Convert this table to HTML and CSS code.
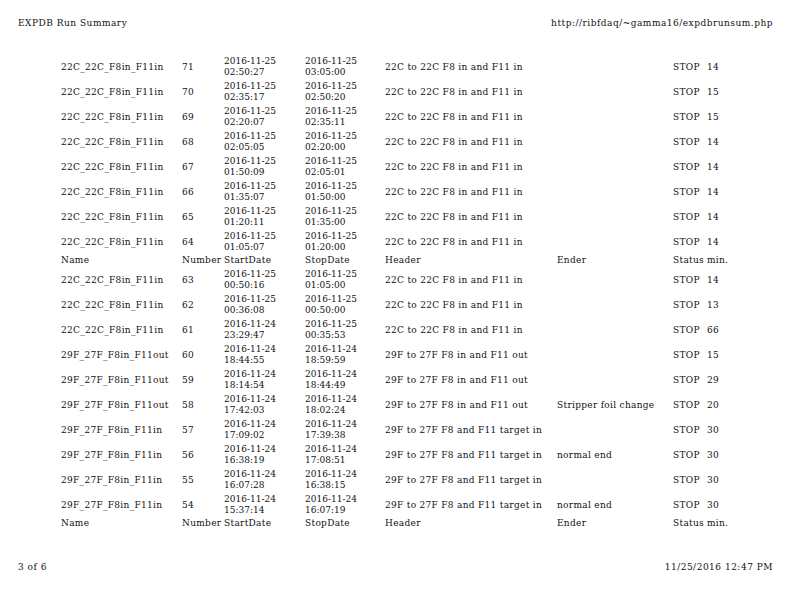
FILE: index.html
```html
<!DOCTYPE html>
<html lang="en">
<head>
    <meta charset="UTF-8">
    <title>EXPDB Run Summary</title>
    <link rel="stylesheet" href="styles.css">
</head>
<body>
    <div class="page">
        <div class="print-head">
            <span>EXPDB Run Summary</span>
            <span>http://ribfdaq/~gamma16/expdbrunsum.php</span>
        </div>

        <table class="runs">
            <colgroup>
                <col class="c-name"><col class="c-num"><col class="c-date"><col class="c-date2">
                <col class="c-header"><col class="c-ender"><col class="c-status"><col class="c-min">
            </colgroup>
            <tr><td>22C_22C_F8in_F11in</td><td>71</td><td class="dt">2016-11-25 02:50:27</td><td class="dt">2016-11-25 03:05:00</td><td>22C to 22C F8 in and F11 in</td><td></td><td>STOP</td><td>14</td></tr>
            <tr><td>22C_22C_F8in_F11in</td><td>70</td><td class="dt">2016-11-25 02:35:17</td><td class="dt">2016-11-25 02:50:20</td><td>22C to 22C F8 in and F11 in</td><td></td><td>STOP</td><td>15</td></tr>
            <tr><td>22C_22C_F8in_F11in</td><td>69</td><td class="dt">2016-11-25 02:20:07</td><td class="dt">2016-11-25 02:35:11</td><td>22C to 22C F8 in and F11 in</td><td></td><td>STOP</td><td>15</td></tr>
            <tr><td>22C_22C_F8in_F11in</td><td>68</td><td class="dt">2016-11-25 02:05:05</td><td class="dt">2016-11-25 02:20:00</td><td>22C to 22C F8 in and F11 in</td><td></td><td>STOP</td><td>14</td></tr>
            <tr><td>22C_22C_F8in_F11in</td><td>67</td><td class="dt">2016-11-25 01:50:09</td><td class="dt">2016-11-25 02:05:01</td><td>22C to 22C F8 in and F11 in</td><td></td><td>STOP</td><td>14</td></tr>
            <tr><td>22C_22C_F8in_F11in</td><td>66</td><td class="dt">2016-11-25 01:35:07</td><td class="dt">2016-11-25 01:50:00</td><td>22C to 22C F8 in and F11 in</td><td></td><td>STOP</td><td>14</td></tr>
            <tr><td>22C_22C_F8in_F11in</td><td>65</td><td class="dt">2016-11-25 01:20:11</td><td class="dt">2016-11-25 01:35:00</td><td>22C to 22C F8 in and F11 in</td><td></td><td>STOP</td><td>14</td></tr>
            <tr><td>22C_22C_F8in_F11in</td><td>64</td><td class="dt">2016-11-25 01:05:07</td><td class="dt">2016-11-25 01:20:00</td><td>22C to 22C F8 in and F11 in</td><td></td><td>STOP</td><td>14</td></tr>
            <tr class="hdr"><td>Name</td><td>Number</td><td>StartDate</td><td>StopDate</td><td>Header</td><td>Ender</td><td>Status</td><td>min.</td></tr>
            <tr><td>22C_22C_F8in_F11in</td><td>63</td><td class="dt">2016-11-25 00:50:16</td><td class="dt">2016-11-25 01:05:00</td><td>22C to 22C F8 in and F11 in</td><td></td><td>STOP</td><td>14</td></tr>
            <tr><td>22C_22C_F8in_F11in</td><td>62</td><td class="dt">2016-11-25 00:36:08</td><td class="dt">2016-11-25 00:50:00</td><td>22C to 22C F8 in and F11 in</td><td></td><td>STOP</td><td>13</td></tr>
            <tr><td>22C_22C_F8in_F11in</td><td>61</td><td class="dt">2016-11-24 23:29:47</td><td class="dt">2016-11-25 00:35:53</td><td>22C to 22C F8 in and F11 in</td><td></td><td>STOP</td><td>66</td></tr>
            <tr><td>29F_27F_F8in_F11out</td><td>60</td><td class="dt">2016-11-24 18:44:55</td><td class="dt">2016-11-24 18:59:59</td><td>29F to 27F F8 in and F11 out</td><td></td><td>STOP</td><td>15</td></tr>
            <tr><td>29F_27F_F8in_F11out</td><td>59</td><td class="dt">2016-11-24 18:14:54</td><td class="dt">2016-11-24 18:44:49</td><td>29F to 27F F8 in and F11 out</td><td></td><td>STOP</td><td>29</td></tr>
            <tr><td>29F_27F_F8in_F11out</td><td>58</td><td class="dt">2016-11-24 17:42:03</td><td class="dt">2016-11-24 18:02:24</td><td>29F to 27F F8 in and F11 out</td><td>Stripper foil change</td><td>STOP</td><td>20</td></tr>
            <tr><td>29F_27F_F8in_F11in</td><td>57</td><td class="dt">2016-11-24 17:09:02</td><td class="dt">2016-11-24 17:39:38</td><td>29F to 27F F8 and F11 target in</td><td></td><td>STOP</td><td>30</td></tr>
            <tr><td>29F_27F_F8in_F11in</td><td>56</td><td class="dt">2016-11-24 16:38:19</td><td class="dt">2016-11-24 17:08:51</td><td>29F to 27F F8 and F11 target in</td><td>normal end</td><td>STOP</td><td>30</td></tr>
            <tr><td>29F_27F_F8in_F11in</td><td>55</td><td class="dt">2016-11-24 16:07:28</td><td class="dt">2016-11-24 16:38:15</td><td>29F to 27F F8 and F11 target in</td><td></td><td>STOP</td><td>30</td></tr>
            <tr><td>29F_27F_F8in_F11in</td><td>54</td><td class="dt">2016-11-24 15:37:14</td><td class="dt">2016-11-24 16:07:19</td><td>29F to 27F F8 and F11 target in</td><td>normal end</td><td>STOP</td><td>30</td></tr>
            <tr class="hdr"><td>Name</td><td>Number</td><td>StartDate</td><td>StopDate</td><td>Header</td><td>Ender</td><td>Status</td><td>min.</td></tr>
        </table>

        <div class="print-foot">
            <span>3 of 6</span>
            <span>11/25/2016 12:47 PM</span>
        </div>
    </div>
</body>
</html>
```

FILE: styles.css
```css
body {
    margin: 0;
    background: #fff;
    color: #111;
    font-family: "DejaVu Serif", serif;
    font-size: 9px;
    line-height: 11px;
}
.page {
    width: 792px;
    height: 612px;
    display: flex;
    flex-direction: column;
}
.print-head, .print-foot {
    display: flex;
    justify-content: space-between;
    padding: 0 19px 0 18px;
    letter-spacing: 0.5px;
}
.print-head { padding-top: 18px; }
.print-foot { margin-top: auto; padding-bottom: 39px; }

.runs {
    margin: 25px 0 0 60px;
    border-collapse: separate;
    border-spacing: 0 1px;
    table-layout: fixed;
    width: 688px;
    letter-spacing: 0.3px;
}
.runs td {
    padding: 1px 1px;
    vertical-align: middle;
}
.runs td.dt { letter-spacing: 0; }
.runs .hdr td {
    padding: 0 1px 1px;
    white-space: nowrap;
}
.c-name { width: 121px; }
.c-num { width: 42px; }
.c-date { width: 81px; }
.c-date2 { width: 80px; }
.c-header { width: 172px; }
.c-ender { width: 116px; }
.c-status { width: 34px; }
.c-min { width: 42px; }
```
